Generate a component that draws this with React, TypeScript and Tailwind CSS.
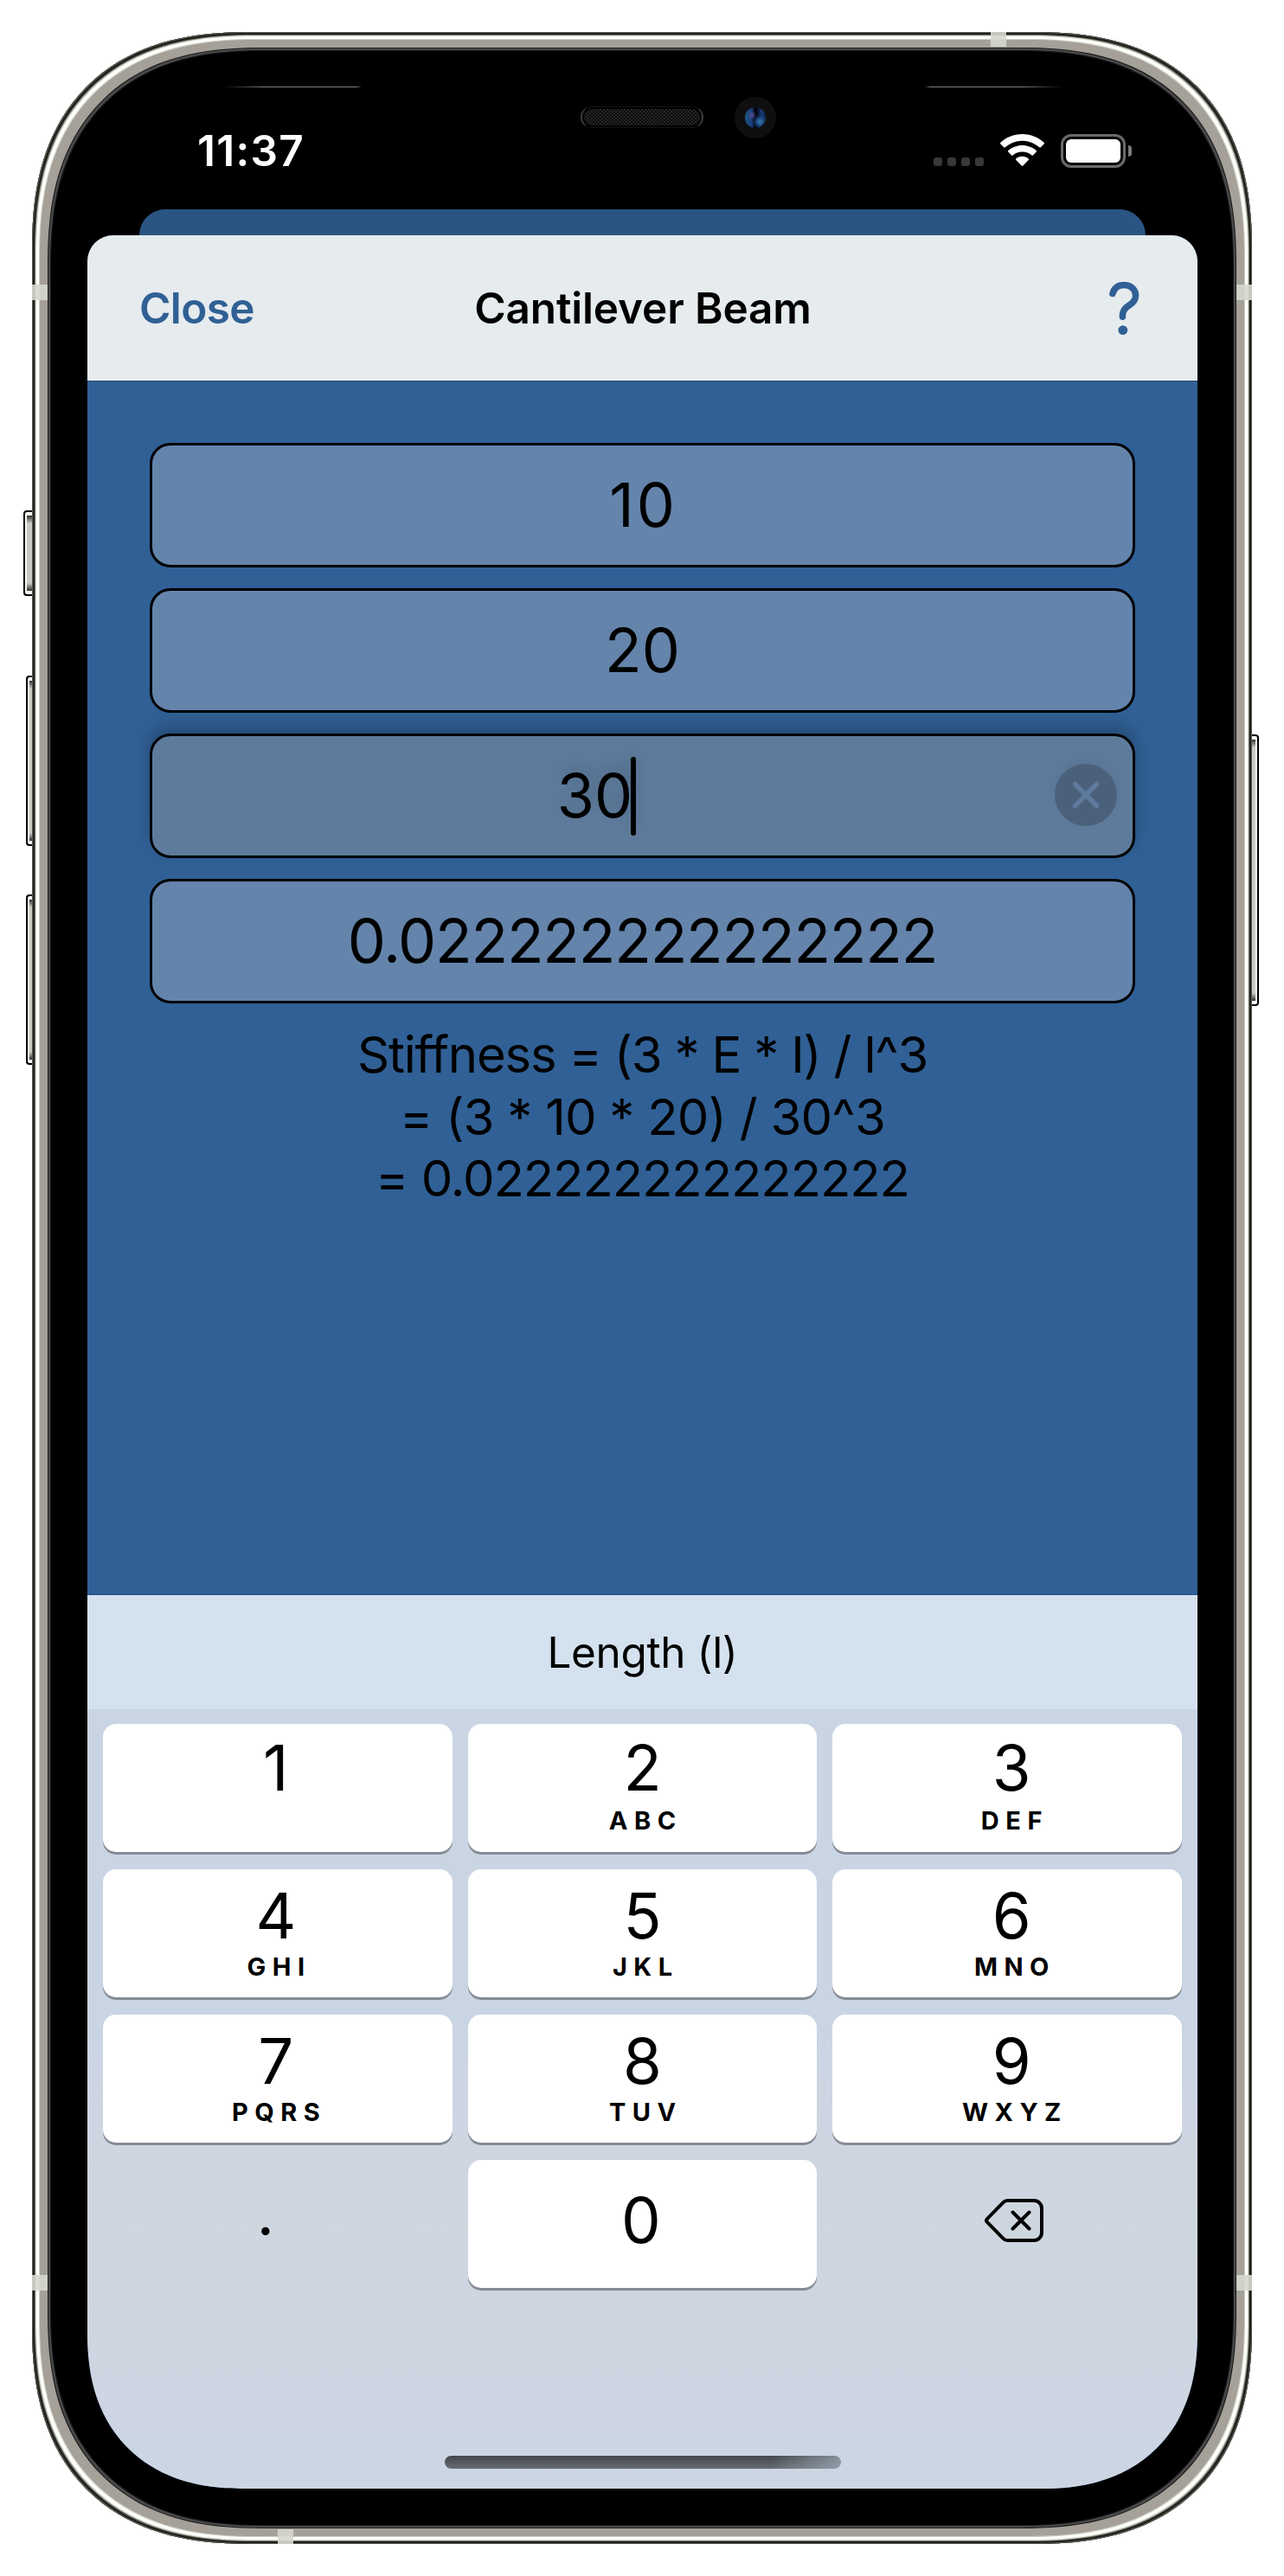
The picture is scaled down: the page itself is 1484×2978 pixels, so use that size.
import React from "react";

type KeyDef = { digit: string; letters?: string };

const KEY_ROWS: KeyDef[][] = [
  [{ digit: "1" }, { digit: "2", letters: "ABC" }, { digit: "3", letters: "DEF" }],
  [
    { digit: "4", letters: "GHI" },
    { digit: "5", letters: "JKL" },
    { digit: "6", letters: "MNO" },
  ],
  [
    { digit: "7", letters: "PQRS" },
    { digit: "8", letters: "TUV" },
    { digit: "9", letters: "WXYZ" },
  ],
];

const KEY_BASE =
  "flex h-[148px] flex-col items-center rounded-[15px] bg-white text-black shadow-[0_3px_0_#858b94]";
const DIGIT = "text-[72.5px] leading-[72px]";
const COLUMN_SHIFT = ["pr-[4px]", "pr-0", "pl-[10px]"];

function SideButton({ className, right = false }: { className: string; right?: boolean }) {
  return (
    <div
      className={`absolute border-2 border-black bg-[#f8f8f4] py-1 ${
        right ? "rounded-r-[4px] border-l-0 pr-[2px]" : "rounded-l-[4px] border-r-0 pl-[2px]"
      } ${className}`}
    >
      <div className="h-full w-full bg-[linear-gradient(to_bottom,#2e2e2b_0,#c9c9c4_9px,#c9c9c4_calc(100%-9px),#2e2e2b_100%)]" />
    </div>
  );
}

function StatusBar() {
  return (
    <div className="flex h-[205px] items-start justify-between pt-[112px] pr-[76px] pl-[127px]">
      <span className="text-[49.5px] leading-[50px] font-semibold tracking-[1.3px] text-white">
        11:37
      </span>
      <div className="flex h-[50px] items-center">
        <div className="mt-[26px] mr-[19px] flex gap-[6px]">
          {[0, 1, 2, 3].map((i) => (
            <span key={i} className="size-[10px] rounded-[3px] bg-[#383838]" />
          ))}
        </div>
        <svg className="mr-[19px] h-[38px] w-[51px]" viewBox="0 0 51 38" fill="#fff">
          <path d="M25.500 0C35.300 0 44.300 3.800 50.600 9.800c.5.5.5 1.100 0 1.600L46.800 15.300c-.4.4-1 .4-1.500 0C39.900 10.600 33 7.700 25.500 7.700S11.100 10.600 5.700 15.300c-.5.4-1.100.4-1.500 0L.4 11.400c-.5-.5-.5-1.100 0-1.600C6.700 3.800 15.700 0 25.500 0Z" />
          <path d="M25.500 12.900c6.200 0 11.900 2.300 16.200 6.100.5.5.5 1.100.1 1.600l-3.800 3.900c-.4.4-1 .4-1.500 0-3-2.500-6.800-4-11-4s-8 1.500-11 4c-.5.4-1.100.4-1.500 0l-3.800-3.900c-.4-.5-.4-1.100.1-1.600 4.300-3.800 10-6.100 16.200-6.100Z" />
          <path d="M25.500 25.700c2.700 0 5.200 1 7.100 2.600.5.400.5 1.100.1 1.600l-6.300 6.700c-.5.600-1.300.6-1.800 0l-6.300-6.700c-.4-.5-.4-1.200.1-1.600 1.900-1.600 4.400-2.600 7.100-2.600Z" />
        </svg>
        <div className="h-[39px] w-[75px] rounded-[12px] border-[3px] border-[#6a6a6a] p-[3px]">
          <div className="h-full w-full rounded-[6px] bg-white" />
        </div>
        <div className="ml-[3px] h-[13px] w-[4px] rounded-r-full bg-[#7a7a7a]" />
      </div>
    </div>
  );
}

function Header() {
  return (
    <header className="grid h-[168px] grid-cols-3 items-center border-b border-[#f3f7f8] bg-[#e6ebee] pr-[63px] pl-[60px]">
      <button className="justify-self-start text-[49.5px] leading-[60px] font-semibold tracking-[-0.6px] text-[#306095]">
        Close
      </button>
      <h1 className="justify-self-center pl-[4px] text-[49.5px] leading-[60px] font-semibold tracking-[-0.15px] whitespace-nowrap text-black">
        Cantilever Beam
      </h1>
      <button aria-label="Help" className="justify-self-end">
        <svg className="h-[64px] w-[42px]" viewBox="0 0 42 64" fill="none">
          <path
            d="M6.900 15.500C8.800 8.700 13.700 5.600 20 5.600c7.600 0 13.600 4.500 13.600 11.800 0 5.600-3 8.800-8 11.900-5 3.100-7.200 6-7.200 11.200v1.700"
            stroke="#306095"
            strokeWidth="7.500"
            strokeLinecap="round"
            strokeLinejoin="round"
          />
          <circle cx="18.800" cy="57.600" r="5.400" fill="#306095" />
        </svg>
      </button>
    </header>
  );
}

function Field({ value, className = "" }: { value: string; className?: string }) {
  return (
    <div className="flex h-[144px] items-center justify-center rounded-[24px] border-[3px] border-black bg-[#6484ab]">
      <span className={`text-[70px] leading-[84px] text-black ${className}`}>{value}</span>
    </div>
  );
}

function ActiveField({ value }: { value: string }) {
  return (
    <div className="relative flex h-[144px] items-center justify-center rounded-[24px] border-[3px] border-black bg-[#5e7b9c] pr-[106px] shadow-[0_-9px_18px_rgba(0,0,0,0.22)]">
      <span className="text-[70px] leading-[84px] text-black [text-shadow:0_-9px_18px_rgba(0,0,0,0.16)]">
        {value}
      </span>
      <span className="-ml-[2px] h-[91px] w-[6px] rounded-full bg-black shadow-[0_-6px_18px_rgba(0,0,0,0.14)]" />
      <button
        aria-label="Clear text"
        className="absolute top-[32px] right-[18px] size-[72px] rounded-full bg-[#4b617b] shadow-[0_-6px_14px_rgba(0,0,0,0.05)]"
      >
        <svg className="size-[72px]" viewBox="0 0 72 72">
          <path
            d="M23.500 23.500 48.500 48.500M48.500 23.500 23.500 48.500"
            stroke="#5e7a9d"
            strokeWidth="5.500"
            strokeLinecap="round"
          />
        </svg>
      </button>
    </div>
  );
}

function Keypad() {
  return (
    <div className="flex-1 bg-[linear-gradient(to_bottom,#c9d5e3_0,#cad5e4_380px,#cfd5e2_470px,#ced6e0_600px,#cfd5e2_800px,#ccd6e2_850px,#ccd6e2_100%)] px-[18px] pt-[17px]">
      <div className="grid grid-cols-3 gap-x-[18px] gap-y-[20px]">
        {KEY_ROWS.map((row, r) =>
          row.map((k, c) => (
            <button
              key={k.digit}
              className={`${KEY_BASE} ${COLUMN_SHIFT[c]} ${r === 0 ? "pt-[15px]" : "pt-[18px]"}`}
            >
              <span className={DIGIT}>{k.digit}</span>
              {k.letters && (
                <span
                  className={`pl-[7.5px] text-[29px] leading-[30px] font-bold tracking-[7.5px] ${
                    r === 0 ? "mt-[10px]" : "mt-[8px]"
                  }`}
                >
                  {k.letters}
                </span>
              )}
            </button>
          )),
        )}
        <button className="flex h-[148px] items-center justify-center pr-[28px] pb-[24px] text-[70px] leading-[72px] text-black">
          .
        </button>
        <button className={`${KEY_BASE} pt-[34px] pr-[3px]`}>
          <span className={DIGIT}>0</span>
        </button>
        <button
          aria-label="Delete"
          className="flex h-[148px] items-center justify-center pb-[8px] pl-[15px]"
        >
          <svg className="h-[50px] w-[68px]" viewBox="0 0 68 50" fill="none">
            <path
              d="M26.500 2H57a9 9 0 0 1 9 9v28a9 9 0 0 1-9 9H26.500a7 7 0 0 1-5-2.100L2.700 26.700a2.400 2.400 0 0 1 0-3.400L21.500 4.100a7 7 0 0 1 5-2.100ZM32.500 15.500 51.500 34.500M51.500 15.500 32.500 34.500"
              stroke="#000"
              strokeWidth="4"
              strokeLinecap="round"
              strokeLinejoin="round"
            />
          </svg>
        </button>
      </div>
      <div className="mx-auto mt-[194px] h-[15px] w-[458px] rounded-full bg-[linear-gradient(100deg,transparent_82%,rgba(160,172,186,0.75)_100%),linear-gradient(to_bottom,#42484b,#666b73)]" />
    </div>
  );
}

function AntennaBand({ className }: { className: string }) {
  return <div className={`absolute bg-[#d6d7ce]/90 ${className}`} />;
}

export default function App() {
  return (
    <div className="relative h-[2978px] w-[1484px] overflow-hidden bg-white p-[37px] font-['Inter',sans-serif]">
      <SideButton className="top-[590px] left-[27px] h-[99px] w-[11px]" />
      <SideButton className="top-[781px] left-[30px] h-[197px] w-[8px]" />
      <SideButton className="top-[1034px] left-[30px] h-[197px] w-[8px]" />
      <SideButton right className="top-[849px] left-[1446px] h-[314px] w-[9px]" />

      <div className="relative h-[2904px] w-[1410px] rounded-[253px] bg-black pr-[63px] pl-[64px] shadow-[inset_0_0_0_1px_#5c5c54,inset_0_0_0_3px_#1f1f1c,inset_0_0_0_4px_#77776d,inset_0_0_0_5px_#d8d9d2,inset_0_0_0_8px_#fdfffa,inset_0_0_0_9px_#d0d0c9,inset_0_0_0_18px_#a5a198,inset_0_0_0_19px_#1c1c1c,inset_0_0_0_21px_#4a4a4c,inset_0_0_0_22px_#1a1a1b] [corner-shape:superellipse(1.27)]">
        <AntennaBand className="top-0 left-[1108px] h-[17px] w-[18px]" />
        <AntennaBand className="top-[292px] left-0 h-[18px] w-[18px]" />
        <AntennaBand className="top-[292px] right-0 h-[18px] w-[18px]" />
        <AntennaBand className="top-[2593px] left-0 h-[18px] w-[18px]" />
        <AntennaBand className="top-[2593px] right-0 h-[18px] w-[18px]" />
        <AntennaBand className="bottom-0 left-[284px] h-[17px] w-[18px]" />

        <div className="absolute top-[63px] left-[221px] h-px w-[160px] bg-[linear-gradient(to_right,transparent,#85827e_30%,#85827e_96%,transparent)]" />
        <div className="absolute top-[63px] left-[1032px] h-px w-[160px] bg-[linear-gradient(to_left,transparent,#85827e_30%,#85827e_96%,transparent)]" />
        <div className="absolute top-[86px] left-[634px] h-[25px] w-[142px] rounded-full border-x-2 border-y border-x-[#3e3e3e] border-y-[#131313] p-[2px]">
          <div className="h-full w-full rounded-full bg-[#0a0a0a] bg-[repeating-conic-gradient(#262626_0_25%,#0b0b0b_0_50%)] bg-[length:4px_4px]" />
        </div>
        <div className="absolute top-[75px] left-[812px] flex size-[48px] items-center justify-center rounded-full bg-[#0f0f10]">
          <div className="size-[24px] rounded-full bg-[radial-gradient(circle_at_72%_70%,#3a7fb0_0,#1c4a80_16%,transparent_34%),radial-gradient(circle_at_34%_38%,#5a4a9a_0,transparent_24%),linear-gradient(to_right,#1d5a80_0,#1a3a78_34%,#04060f_46%,#04060f_56%,#173a78_80%,#10264d_100%)]" />
        </div>

        <StatusBar />
        <div className="mx-[60px] h-[30px] rounded-t-[30px] bg-[#2a5582]" />
        <main className="flex h-[2605px] flex-col overflow-hidden rounded-t-[30px] rounded-b-[180px] bg-[#306095] [corner-bottom-left-shape:superellipse(1.2)] [corner-bottom-right-shape:superellipse(1.2)]">
          <Header />
          <section className="h-[1404px] border-t border-b border-t-[#1b4066] border-b-[#1b4a86] px-[72px] pt-[71px]">
            <div className="flex flex-col gap-[24px]">
              <Field value="10" className="pl-[2px] tracking-[3px]" />
              <Field value="20" />
              <ActiveField value="30" />
              <Field value="0.022222222222222" className="tracking-[-1.25px]" />
            </div>
            <div className="mt-[24px] flex flex-col items-center text-[58px] leading-[71.5px] text-black">
              <p className="tracking-[-1.2px]">Stiffness = (3 * E * I) / l^3</p>
              <p className="tracking-[-0.75px]">= (3 * 10 * 20) / 30^3</p>
              <p className="tracking-[-1.05px]">= 0.022222222222222</p>
            </div>
          </section>
          <div className="flex h-[132px] items-center justify-center bg-[#d4e1ef] text-[49.5px] leading-[60px] tracking-[-0.4px] text-black">
            Length (l)
          </div>
          <Keypad />
        </main>
      </div>
    </div>
  );
}
